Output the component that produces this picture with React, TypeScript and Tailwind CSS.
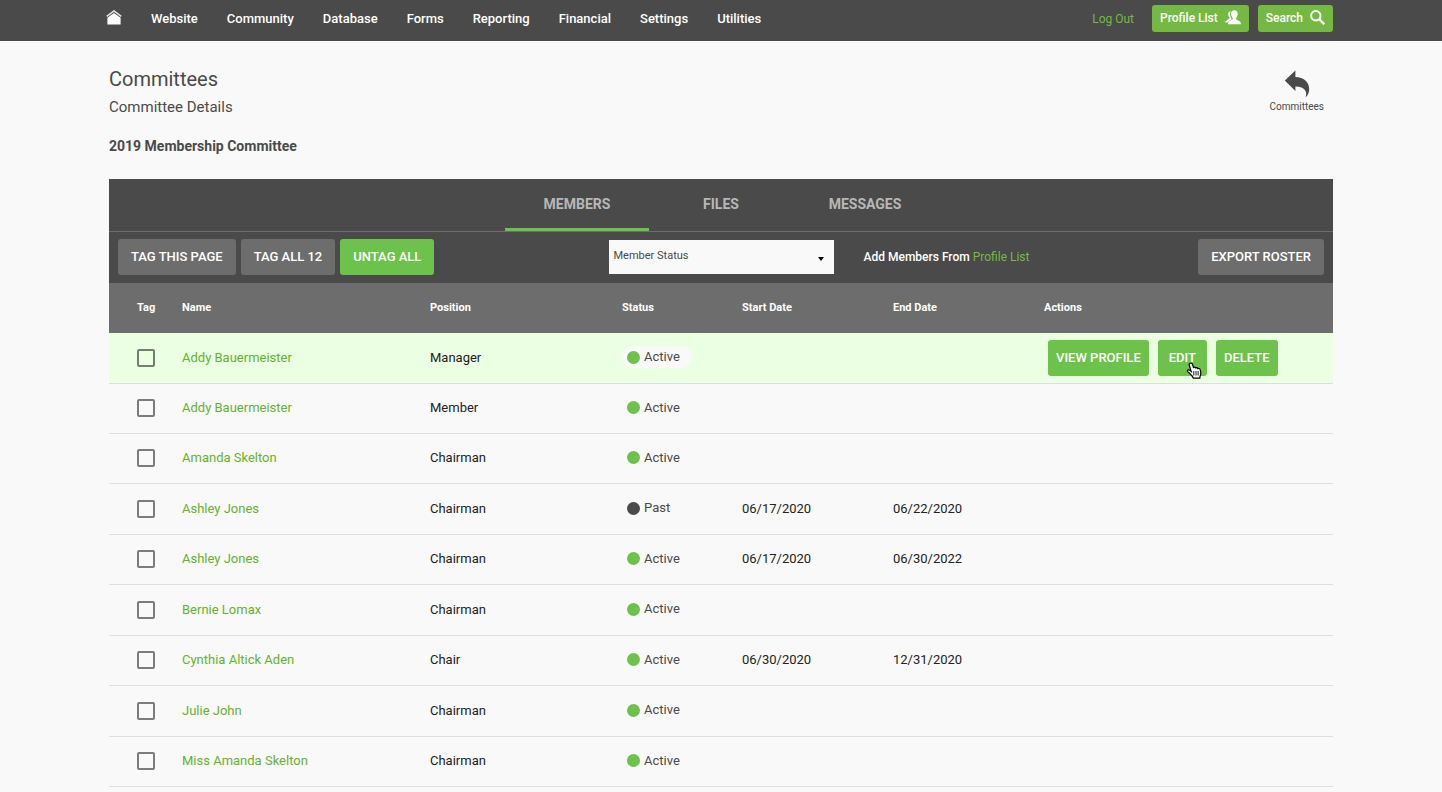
import { useState } from 'react';

const navItems = ['Website', 'Community', 'Database', 'Forms', 'Reporting', 'Financial', 'Settings', 'Utilities'];

const tabs = ['Members', 'Files', 'Messages'];

type Member = {
  id: number;
  name: string;
  position: string;
  status: 'Active' | 'Past';
  startDate?: string;
  endDate?: string;
};

const members: Member[] = [
  { id: 1, name: 'Addy Bauermeister', position: 'Manager', status: 'Active' },
  { id: 2, name: 'Addy Bauermeister', position: 'Member', status: 'Active' },
  { id: 3, name: 'Amanda Skelton', position: 'Chairman', status: 'Active' },
  { id: 4, name: 'Ashley Jones', position: 'Chairman', status: 'Past', startDate: '06/17/2020', endDate: '06/22/2020' },
  { id: 5, name: 'Ashley Jones', position: 'Chairman', status: 'Active', startDate: '06/17/2020', endDate: '06/30/2022' },
  { id: 6, name: 'Bernie Lomax', position: 'Chairman', status: 'Active' },
  { id: 7, name: 'Cynthia Altick Aden', position: 'Chair', status: 'Active', startDate: '06/30/2020', endDate: '12/31/2020' },
  { id: 8, name: 'Julie John', position: 'Chairman', status: 'Active' },
  { id: 9, name: 'Miss Amanda Skelton', position: 'Chairman', status: 'Active' },
];

function HomeIcon() {
  return (
    <svg viewBox="0 0 16 16" className="h-4 w-4" fill="none">
      <path d="M.7 6.300 8 .9l7.300 5.400" stroke="#e4e4e4" strokeWidth="1.500" />
      <path d="M8 2.900 14.600 7.800V14.500H1.400V7.800Z" fill="#fff" />
    </svg>
  );
}

function PeopleIcon() {
  return (
    <svg viewBox="0 0 16 15" className="h-[15px] w-4" fill="#fff">
      <path d="M5.6 1.2C3.9 1.4 3 2.8 3.2 4.6c.1 1.3.7 2.1 1.2 2.9.2.6 0 1.2-.6 1.6L1 10.7c-.6.4-.9 1-.9 1.8h3c.3-1.2 1.1-1.7 2.3-2.3l1.2-.6c.2-.6 0-1-.4-1.6C5.2 6.6 4.7 3 5.6 1.2Z" />
      <path d="M9.4.3C7.2.3 6 1.9 6.1 4.1c.1 1.7.8 2.9 1.5 3.8.3.9.1 1.5-.6 1.9l-2.300 1.200c-1.100.6-1.700 1.300-1.800 3.200H15.900c-.1-1.900-.7-2.600-1.800-3.200l-2.300-1.200c-.7-.4-.9-1-.6-1.900.7-.9 1.400-2.100 1.500-3.800C12.800 1.900 11.600.3 9.400.3Z" />
    </svg>
  );
}

function SearchIcon() {
  return (
    <svg viewBox="0 0 15 15" className="h-[15px] w-[15px]" fill="none" stroke="#fff">
      <circle cx="5.800" cy="5.800" r="4.700" strokeWidth="2" />
      <path d="m9.200 9.200 5 5" strokeWidth="2.400" />
    </svg>
  );
}

function BackIcon() {
  return (
    <svg viewBox="0 0 26 28" className="h-7 w-[26px]" fill="#4a4a4a">
      <path d="M.8 10.600 11.400.5v6.400C19.800 7.200 25.200 11.800 25.200 19c0 3.400-1.200 6.400-3.700 8.600 1-3.200.9-5.400-.3-7.200-1.600-2.600-4.900-3.900-9.800-4v4.600Z" />
    </svg>
  );
}

function HandCursor() {
  return (
    <svg viewBox="0 0 16 18" className="absolute top-[22px] left-7 h-[18px] w-4">
      <path
        d="M4.300 1.200c1-.3 1.900.2 2.200 1.100l.9 3.100c.9-.6 1.900-.3 2.300.5.900-.4 1.700 0 2.100.7.9-.4 2-.1 2.300.8.700 1.900.9 3.700.4 5.600-.3.900-.6 1.500-.7 3.200H7.300c-.6-2.400-2.500-3.800-4.100-5.200-1.100-.9-2-1.600-1.800-2.300.3-1 1.700-1 2.600-.3l1.200 1L3.200 3c-.2-.8.2-1.500 1.100-1.800Z"
        fill="#fff"
        stroke="#000"
        strokeWidth="1.200"
      />
      <path d="M7.800 9v4.500M10 9v4.500M12.100 9v4.500" stroke="#000" strokeWidth=".9" fill="none" />
    </svg>
  );
}

function StatusPill({ status }: { status: Member['status'] }) {
  return (
    <span className="inline-flex h-[22px] items-center gap-1 rounded-full bg-[#f9f9f9] pr-3 pl-[5px] text-[#4a4a4a]">
      <span className={`mt-px h-[13px] w-[13px] rounded-full ${status === 'Active' ? 'bg-[#6cc24a]' : 'bg-[#4a4a4a]'}`} />
      {status}
    </span>
  );
}

export default function App() {
  const [activeTab, setActiveTab] = useState('Members');

  return (
    <div className="min-h-screen bg-[#f9f9f9] font-[Roboto,sans-serif] text-[13px] text-[#4a4a4a]">
      <header className="bg-[#4a4a4a] text-white">
        <div className="mx-auto flex h-[41px] max-w-[1224px] items-start justify-between">
          <nav className="-ml-[3px] flex items-center gap-[29px] pt-[9px] text-[13px] leading-5 font-medium">
            <a href="#" aria-label="Home" className="pb-[2px]">
              <HomeIcon />
            </a>
            {navItems.map((item) => (
              <a key={item} href="#">{item}</a>
            ))}
          </nav>
          <div className="flex items-center gap-[9px] pt-[5px] text-xs">
            <a href="#" className="mr-[9px] text-[#74b943]">Log Out</a>
            <button className="flex h-[27px] items-center gap-[7px] rounded-[3px] bg-[#74b943] px-2 pb-[2px] font-medium">
              Profile List
              <PeopleIcon />
            </button>
            <button className="flex h-[27px] items-center gap-[7px] rounded-[3px] bg-[#74b943] px-2 pb-[2px] font-medium">
              Search
              <SearchIcon />
            </button>
          </div>
        </div>
      </header>

      <main className="mx-auto max-w-[1224px]">
        <div className="flex justify-between pt-6">
          <div>
            <h1 className="text-xl leading-7">Committees</h1>
            <h2 className="text-[15px] leading-7">Committee Details</h2>
            <h3 className="pt-[11px] text-sm leading-7 font-bold">2019 Membership Committee</h3>
          </div>
          <a href="#" className="mt-[5px] mr-[9px] flex flex-col items-center gap-px self-start text-[10px] leading-4">
            <BackIcon />
            Committees
          </a>
        </div>

        <section className="mt-[19px] bg-[#4a4a4a] text-white">
          <div role="tablist" className="flex h-[53px] justify-center border-b border-[#6d6d6d]">
            {tabs.map((tab) => (
              <button
                key={tab}
                role="tab"
                aria-selected={activeTab === tab}
                onClick={() => setActiveTab(tab)}
                className={`w-36 border-b-[3px] text-sm font-bold text-[#b7b7b7] uppercase ${activeTab === tab ? 'border-[#6cc24a]' : 'border-transparent'}`}
              >
                {tab}
              </button>
            ))}
          </div>

          <div className="grid h-[51px] grid-cols-[1fr_auto_1fr] items-center px-[9px] pb-[2px] text-[13px] font-medium">
            <div className="flex gap-[5px]">
              <button className="h-9 rounded-[3px] bg-[#6d6d6d] px-[13px]">TAG THIS PAGE</button>
              <button className="h-9 rounded-[3px] bg-[#6d6d6d] px-[13px]">TAG ALL 12</button>
              <button className="h-9 rounded-[3px] bg-[#6cc24a] px-[13px]">UNTAG ALL</button>
            </div>
            <div className="relative">
              <select aria-label="Member Status" className="block h-[34px] w-[225px] appearance-none bg-[#f9f9f9] px-[5px] text-[11px] font-normal text-[#4a4a4a]">
                <option>Member Status</option>
                <option>Active</option>
                <option>Past</option>
              </select>
              <svg viewBox="0 0 6 4" className="pointer-events-none absolute top-[17px] right-[10px] h-1 w-[6px]">
                <path d="M0 0h6L3 4Z" fill="#000" />
              </svg>
            </div>
            <div className="flex items-center justify-between pl-[30px]">
              <p className="text-xs">
                Add Members From <a href="#" className="font-normal text-[#74b943]">Profile List</a>
              </p>
              <button className="h-9 rounded-[3px] bg-[#6d6d6d] px-[13px]">EXPORT ROSTER</button>
            </div>
          </div>
        </section>

        <table className="w-full table-fixed text-left">
          <colgroup>
            <col className="w-[73px]" />
            <col className="w-[248px]" />
            <col className="w-[192px]" />
            <col className="w-[120px]" />
            <col className="w-[151px]" />
            <col className="w-[151px]" />
            <col />
          </colgroup>
          <thead className="bg-[#6d6d6d] text-[11px] text-white">
            <tr className="h-[50px]">
              <th className="pl-7">Tag</th>
              <th>Name</th>
              <th>Position</th>
              <th>Status</th>
              <th>Start Date</th>
              <th>End Date</th>
              <th>Actions</th>
            </tr>
          </thead>
          <tbody>
            {members.map((member, i) => (
              <tr key={member.id} className="h-[50px] border-b border-black/10 text-[#222] first:bg-[#ebffe3] nth-[2n+4]:h-[51px]">
                <td className="pl-7">
                  <input
                    type="checkbox"
                    aria-label={`Tag ${member.name}`}
                    className="block h-[18px] w-[18px] appearance-none rounded-[2px] border-2 border-black/50 checked:bg-[#6cc24a]"
                  />
                </td>
                <td><a href="#" className="text-[#66b22e]">{member.name}</a></td>
                <td>{member.position}</td>
                <td><StatusPill status={member.status} /></td>
                <td>{member.startDate}</td>
                <td>{member.endDate}</td>
                <td>
                  {i === 0 && (
                    <div className="flex gap-[9px] pl-1 font-medium text-white">
                      <button className="h-9 rounded-[3px] bg-[#6cc24a] px-2">VIEW PROFILE</button>
                      <button className="relative h-9 rounded-[3px] bg-[#6cc24a] px-[11px]">
                        EDIT
                        <HandCursor />
                      </button>
                      <button className="h-9 rounded-[3px] bg-[#6cc24a] px-2">DELETE</button>
                    </div>
                  )}
                </td>
              </tr>
            ))}
          </tbody>
        </table>
      </main>
    </div>
  );
}
